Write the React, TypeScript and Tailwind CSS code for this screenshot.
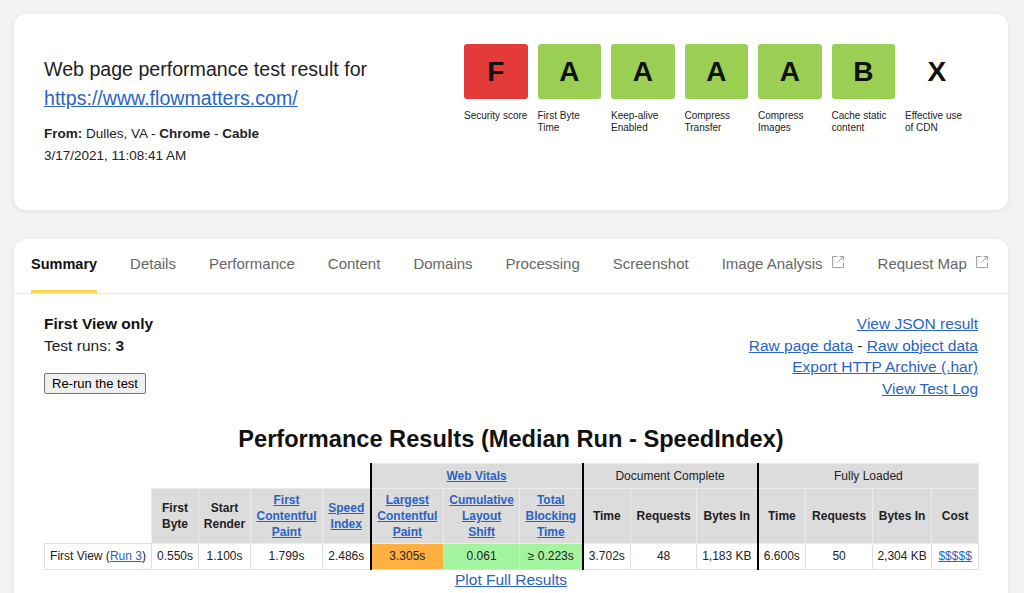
import React from "react";

const LINK = "text-[#2b63c4] underline";

function ExtIcon() {
  return (
    <svg width="14" height="14" viewBox="0 0 14 14" fill="none" stroke="#a0a0a0" strokeWidth="1" className="ml-[8px] mt-[-4px]">
      <path d="M6.5 1.5H1.5v11h11V7.5" />
      <path d="M8.5 1.5h4v4" />
      <path d="M12.5 1.5L6.5 7.5" />
    </svg>
  );
}

const grades: { g: string; bg: string; l1: string; l2?: string }[] = [
  { g: "F", bg: "bg-[#e43a3a]", l1: "Security score" },
  { g: "A", bg: "bg-[#9bcf54]", l1: "First Byte", l2: "Time" },
  { g: "A", bg: "bg-[#9bcf54]", l1: "Keep-alive", l2: "Enabled" },
  { g: "A", bg: "bg-[#9bcf54]", l1: "Compress", l2: "Transfer" },
  { g: "A", bg: "bg-[#9bcf54]", l1: "Compress", l2: "Images" },
  { g: "B", bg: "bg-[#9bcf54]", l1: "Cache static", l2: "content" },
  { g: "X", bg: "", l1: "Effective use", l2: "of CDN" },
];

const tabs = [
  { t: "Summary", active: true },
  { t: "Details" },
  { t: "Performance" },
  { t: "Content" },
  { t: "Domains" },
  { t: "Processing" },
  { t: "Screenshot" },
  { t: "Image Analysis", ext: true },
  { t: "Request Map", ext: true },
];

const TH = "bg-[#dcdcdc] border border-[#ececec] font-bold text-[#222] text-center align-middle px-[2px] leading-[16px]";
const TD = "border border-[#dedede] text-center align-middle text-[#222] px-[3px] whitespace-nowrap";
const THICK = "border-l-2 border-l-black";

export default function App() {
  return (
    <div
      className="min-h-screen bg-[#f2f2f2] pl-[14px] pr-[16px] pt-[14px] pb-[40px] text-[#222]"
      style={{ fontFamily: '"Liberation Sans", Arial, sans-serif' }}
    >
      {/* Header card */}
      <div className="bg-white rounded-xl shadow-[0_1px_4px_rgba(0,0,0,0.08)] h-[196px] px-[30px] pt-[30px] flex">
        <div className="w-[420px] pt-[11px]">
          <div className="text-[19.6px] leading-[29px] text-[#222]">Web page performance test result for</div>
          <div className="text-[19.6px] leading-[29px]">
            <a className={LINK} href="#">https://www.flowmatters.com/</a>
          </div>
          <div className="mt-[10px] text-[13.5px] leading-[22px]">
            <b>From:</b> Dulles, VA - <b>Chrome</b> - <b>Cable</b>
          </div>
          <div className="text-[13.5px] leading-[22px]">3/17/2021, 11:08:41 AM</div>
        </div>
        <div className="flex gap-[10px]">
          {grades.map((g, i) => (
            <div key={i} className="w-[63.5px]">
              <div className={`h-[55px] rounded-[3px] flex items-center justify-center text-[28px] font-bold text-[#111] ${g.bg}`}>
                {g.g}
              </div>
              <div className="mt-[11px] text-[10px] leading-[12px] whitespace-nowrap text-[#222]">
                {g.l1}
                {g.l2 && <br />}
                {g.l2}
              </div>
            </div>
          ))}
        </div>
      </div>

      {/* Main card */}
      <div className="mt-[29px] bg-white rounded-xl shadow-[0_1px_4px_rgba(0,0,0,0.08)] pb-[40px]">
        <div className="flex gap-[33px] pl-[17px] border-b border-[#e6e6e6]">
          {tabs.map((t) => (
            <div
              key={t.t}
              className={`h-[54px] pt-[14px] border-b-[3px] flex items-start leading-[22px] ${
                t.active ? "border-[#fdd64f] font-bold text-[#111] text-[14.5px]" : "border-transparent text-[#666] text-[15px]"
              }`}
            >
              <span>{t.t}</span>
              {t.ext && (
                <span className="flex items-center h-[22px]">
                  <ExtIcon />
                </span>
              )}
            </div>
          ))}
        </div>

        <div className="px-[30px] pt-[19px]">
          <div className="flex justify-between">
            <div>
              <div className="text-[15.5px] leading-[22px] font-bold text-[#111]">First View only</div>
              <div className="text-[15.5px] leading-[22px]">
                Test runs: <b>3</b>
              </div>
              <button className="mt-[16px] h-[21px] px-[7px] text-[13px] leading-[19px] text-black bg-[#efefef] border border-[#767676] rounded-[2px]">
                Re-run the test
              </button>
            </div>
            <div className="text-right text-[15.5px] leading-[21.7px]">
              <div><a className={LINK} href="#">View JSON result</a></div>
              <div>
                <a className={LINK} href="#">Raw page data</a> - <a className={LINK} href="#">Raw object data</a>
              </div>
              <div><a className={LINK} href="#">Export HTTP Archive (.har)</a></div>
              <div><a className={LINK} href="#">View Test Log</a></div>
            </div>
          </div>

          <h2 className="mt-[24px] text-center text-[23.6px] leading-[30px] font-bold text-[#111]">
            Performance Results (Median Run - SpeedIndex)
          </h2>

          <table className="mt-[9px] table-fixed border-collapse w-[934px] text-[12px]">
            <colgroup>
              {[107, 47, 52, 72, 48, 73, 76, 63, 48, 66, 61, 48, 67, 59, 47].map((w, i) => (
                <col key={i} style={{ width: w }} />
              ))}
            </colgroup>
            <thead>
              <tr className="h-[25px]">
                <th colSpan={5} className="border-0"></th>
                <th colSpan={3} className={`${TH} ${THICK}`}>
                  <a className={LINK} href="#">Web Vitals</a>
                </th>
                <th colSpan={3} className={`${TH} ${THICK} font-normal`}>Document Complete</th>
                <th colSpan={4} className={`${TH} ${THICK} font-normal`}>Fully Loaded</th>
              </tr>
              <tr className="h-[55px]">
                <th className="border-0"></th>
                <th className={TH}>First<br />Byte</th>
                <th className={TH}>Start<br />Render</th>
                <th className={TH}>
                  <a className={LINK} href="#">First<br />Contentful<br />Paint</a>
                </th>
                <th className={TH}>
                  <a className={LINK} href="#">Speed<br />Index</a>
                </th>
                <th className={`${TH} ${THICK}`}>
                  <a className={LINK} href="#">Largest<br />Contentful<br />Paint</a>
                </th>
                <th className={TH}>
                  <a className={LINK} href="#">Cumulative<br />Layout<br />Shift</a>
                </th>
                <th className={TH}>
                  <a className={LINK} href="#">Total<br />Blocking<br />Time</a>
                </th>
                <th className={`${TH} ${THICK}`}>Time</th>
                <th className={TH}>Requests</th>
                <th className={TH}>Bytes In</th>
                <th className={`${TH} ${THICK}`}>Time</th>
                <th className={TH}>Requests</th>
                <th className={TH}>Bytes In</th>
                <th className={TH}>Cost</th>
              </tr>
            </thead>
            <tbody>
              <tr className="h-[26px]">
                <td className={TD}>
                  First View (<a className={LINK} href="#">Run 3</a>)
                </td>
                <td className={TD}>0.550s</td>
                <td className={TD}>1.100s</td>
                <td className={TD}>1.799s</td>
                <td className={TD}>2.486s</td>
                <td className={`${TD} ${THICK} bg-[#ffb040]`}>3.305s</td>
                <td className={`${TD} bg-[#a4f3a0]`}>0.061</td>
                <td className={`${TD} bg-[#a4f3a0]`}>≥ 0.223s</td>
                <td className={`${TD} ${THICK}`}>3.702s</td>
                <td className={TD}>48</td>
                <td className={TD}>1,183 KB</td>
                <td className={`${TD} ${THICK}`}>6.600s</td>
                <td className={TD}>50</td>
                <td className={TD}>2,304 KB</td>
                <td className={TD}>
                  <a className={LINK} href="#">$$$$$</a>
                </td>
              </tr>
            </tbody>
          </table>
          <div className="w-[934px] text-center text-[15.5px] leading-[20px]">
            <a className={LINK} href="#">Plot Full Results</a>
          </div>
        </div>
      </div>
    </div>
  );
}
